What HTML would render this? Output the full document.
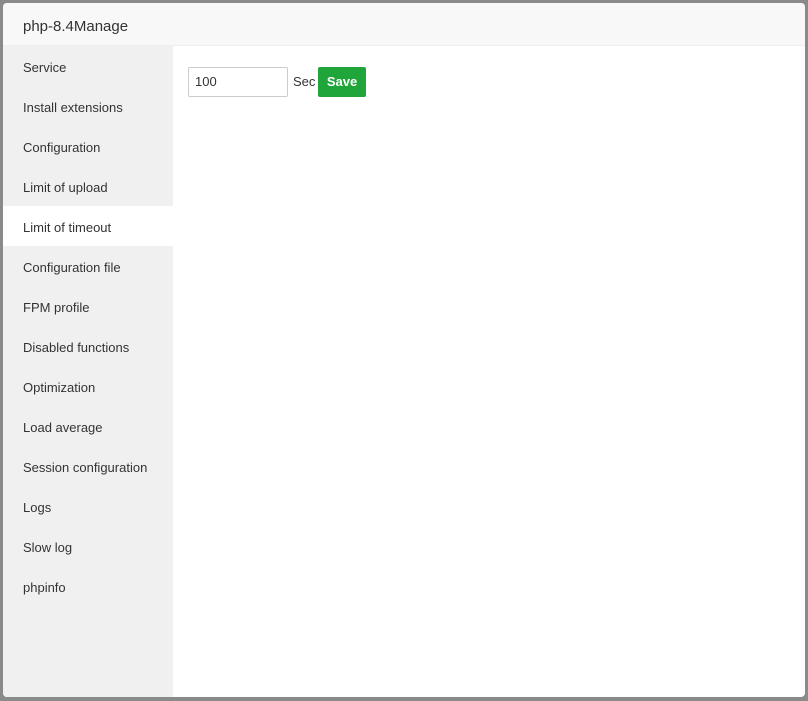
<!DOCTYPE html>
<html><head><style>
body{margin:0;width:808px;height:701px;background:#8a8a8a;font-family:"Liberation Sans",sans-serif;overflow:hidden;position:relative}
.m{position:absolute;left:3px;top:3px;width:802px;height:694px;background:#fff;border-radius:4px;overflow:hidden}
.h{height:43px;background:#f8f8f8;border-bottom:1px solid #eee;box-sizing:border-box;padding-left:20px;line-height:48px;font-size:15px;color:#333}
.s{position:absolute;left:0;top:43px;width:170px;bottom:0;background:#f0f0f0}
.s div{height:40px;line-height:43px;padding-left:20px;font-size:13px;color:#333}
.s .a{background:#fff}
.in{position:absolute;left:185px;top:64px;width:100px;height:30px;box-sizing:border-box;border:1px solid #ccc;border-radius:2px;font-size:13px;line-height:28px;padding-left:6px;color:#333}
.sec{position:absolute;left:290px;top:64px;line-height:30px;font-size:13px;color:#333}
.b{position:absolute;left:315px;top:64px;width:48px;height:30px;background:#20a53a;border-radius:2px;color:#fff;font-size:13px;font-weight:bold;text-align:center;line-height:30px}
</style></head><body>
<div class="m">
<div class="h">php-8.4Manage</div>
<div class="s">
<div>Service</div><div>Install extensions</div><div>Configuration</div><div>Limit of upload</div><div class="a">Limit of timeout</div><div>Configuration file</div><div>FPM profile</div><div>Disabled functions</div><div>Optimization</div><div>Load average</div><div>Session configuration</div><div>Logs</div><div>Slow log</div><div>phpinfo</div>
</div>
<div class="in">100</div><div class="sec">Sec</div><div class="b">Save</div>
</div>
</body></html>
